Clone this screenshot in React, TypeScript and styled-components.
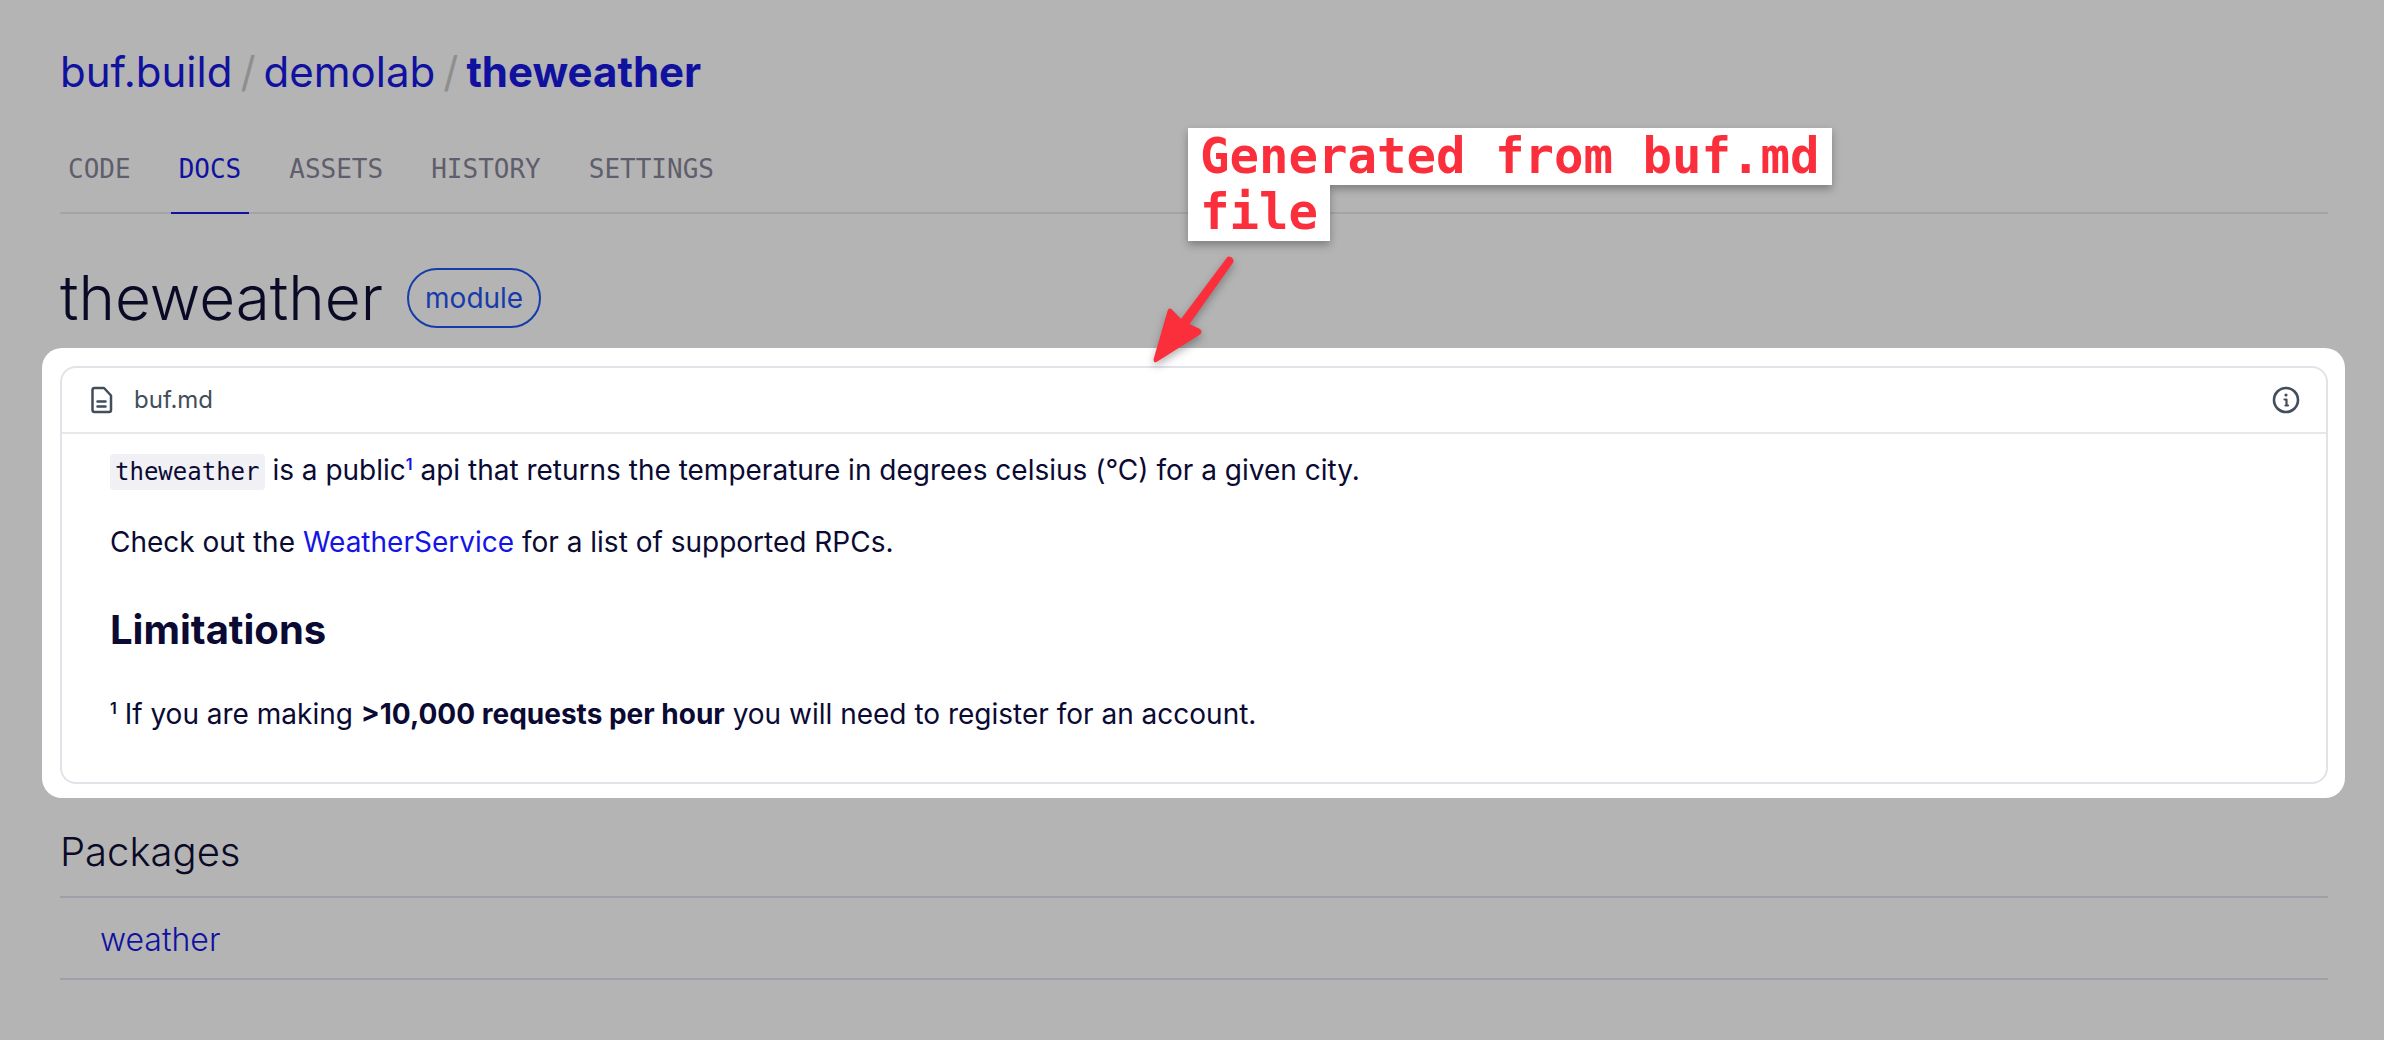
import React from "react";
import styled, { createGlobalStyle } from "styled-components";

const sans = `Inter, "Liberation Sans", sans-serif`;
const mono = `"DejaVu Sans Mono", "Liberation Mono", monospace`;

const GlobalStyle = createGlobalStyle`
  *, *::before, *::after { box-sizing: border-box; }
  body {
    margin: 0;
    background: #b4b4b4;
    color: #0a0a26;
    font-family: ${sans};
  }
  a { color: inherit; text-decoration: none; }
  h1, h2, p, ul, ol { margin: 0; padding: 0; }
  ul, ol { list-style: none; }
`;

const Page = styled.main`
  position: relative;
  min-height: 100vh;
  padding: 48px 56px 60px 60px;
`;

const Breadcrumb = styled.ol`
  display: flex;
  align-items: center;
  gap: 8px;
  font-size: 42px;
  line-height: 48px;
  color: #1111a0;
`;

const Crumb = styled.li<{ $current?: boolean }>`
  font-weight: ${(p) => (p.$current ? 700 : 400)};
`;

const Slash = styled.li`
  color: #8f8f8f;
`;

const Tabs = styled.nav`
  display: flex;
  gap: 32px;
  margin-top: 44px;
  box-shadow: inset 0 -2px #a4a4a6;
`;

const Tab = styled.a<{ $active?: boolean }>`
  padding: 14px 8px 28px;
  border-bottom: 2px solid ${(p) => (p.$active ? "#1111a0" : "transparent")};
  color: ${(p) => (p.$active ? "#1111a0" : "#5f5e6c")};
  font: 26px/30px ${mono};
`;

const TitleRow = styled.header`
  display: flex;
  align-items: center;
  gap: 24px;
  padding: 48px 0 14px;
`;

const Title = styled.h1`
  font-size: 62px;
  font-weight: 300;
  line-height: 72px;
`;

const Badge = styled.span`
  padding: 0 16px;
  border: 2px solid #173caa;
  border-radius: 30px;
  color: #173caa;
  font-size: 28px;
  line-height: 56px;
`;

const Spotlight = styled.section`
  margin: 0 -17px 0 -18px;
  padding: 18px 17px 14px 18px;
  border-radius: 20px;
  background: #fff;
`;

const Card = styled.article`
  border: 2px solid #e2e2e9;
  border-radius: 16px;
  color: #0a0a33;
`;

const CardHeader = styled.header`
  display: flex;
  align-items: center;
  justify-content: space-between;
  height: 66px;
  padding: 0 24px;
  border-bottom: 2px solid #e8e8ea;
  color: #424e5b;
`;

const FileName = styled.div`
  display: flex;
  align-items: center;
  gap: 16px;
  font-size: 24px;
  line-height: 32px;
`;

const InfoButton = styled.button`
  display: flex;
  padding: 0;
  border: 0;
  background: none;
  color: inherit;
`;

const Markdown = styled.div`
  padding: 16px 48px 48px;
  font-size: 28px;
  line-height: 40px;
`;

const Paragraph = styled.p`
  margin-bottom: 32px;

  &:last-child { margin-bottom: 0; }
`;

const Heading = styled.h2`
  margin-bottom: 40px;
  padding-top: 12px;
  font-size: 40px;
  font-weight: 700;
  line-height: 48px;
`;

const Code = styled.code`
  padding: 4px 5px;
  border-radius: 4px;
  background: #f0f0f5;
  font: 24px ${mono};
`;

const TextLink = styled.a`
  && { color: #1414e6; }
`;

const Sup = styled.sup`
  font-size: 16px;
  line-height: 0;
  font-weight: 600;
`;

const Packages = styled.section`
  padding-top: 30px;
`;

const SectionTitle = styled.h2`
  padding-bottom: 20px;
  border-bottom: 2px solid #9f9fa8;
  font-size: 40px;
  font-weight: 300;
  line-height: 48px;
`;

const PackageItem = styled.li`
  padding: 22px 40px 18px;
  border-bottom: 2px solid #9f9fa8;
  color: #1111a0;
  font-size: 32px;
  font-weight: 300;
  line-height: 40px;
`;

const Callout = styled.aside`
  position: absolute;
  top: 129px;
  left: calc(50% - 40px);
  width: 700px;
  color: #fb2f3c;
  filter: drop-shadow(0 4px 4px rgba(0, 0, 0, 0.3));
`;

const CalloutText = styled.p`
  padding-left: 36px;
  font: 700 49px/56px ${mono};
`;

const CalloutLine = styled.span`
  padding: 0 12px;
  background: #fff;
  box-decoration-break: clone;
  -webkit-box-decoration-break: clone;
`;

const Arrow = styled.svg`
  display: block;
  margin-top: 12px;
`;

const tabs = ["CODE", "DOCS", "ASSETS", "HISTORY", "SETTINGS"];

const FileIcon = () => (
  <svg width="32" height="32" viewBox="0 0 32 32" fill="none" stroke="currentColor" strokeWidth="2.500" strokeLinecap="round" strokeLinejoin="round" aria-hidden="true">
    <path d="M8.500 4h9.500l7 7.500v14.500a2 2 0 0 1-2 2h-14.500a2 2 0 0 1-2-2v-20a2 2 0 0 1 2-2z" />
    <path d="M11.500 17.500h8M11.500 22.500h8" />
  </svg>
);

const InfoIcon = () => (
  <svg width="32" height="32" viewBox="0 0 32 32" fill="none" stroke="currentColor" strokeLinecap="round" strokeLinejoin="round" aria-hidden="true">
    <circle cx="16" cy="16" r="12" strokeWidth="2.600" />
    <path d="M14.500 15.500h2v6M15.500 21.500h2.500" strokeWidth="2.200" />
    <circle cx="16" cy="11" r="1.600" fill="currentColor" stroke="none" />
  </svg>
);

export default function App() {
  return (
    <>
      <GlobalStyle />
      <Page>
        <nav aria-label="Breadcrumb">
          <Breadcrumb>
            <Crumb><a href="#buf">buf.build</a></Crumb>
            <Slash aria-hidden="true">/</Slash>
            <Crumb><a href="#demolab">demolab</a></Crumb>
            <Slash aria-hidden="true">/</Slash>
            <Crumb $current><a href="#theweather">theweather</a></Crumb>
          </Breadcrumb>
        </nav>
        <Tabs aria-label="Repository">
          {tabs.map((tab) => (
            <Tab key={tab} href={`#${tab.toLowerCase()}`} $active={tab === "DOCS"}>{tab}</Tab>
          ))}
        </Tabs>
        <TitleRow>
          <Title>theweather</Title>
          <Badge>module</Badge>
        </TitleRow>
        <Spotlight>
          <Card>
            <CardHeader>
              <FileName><FileIcon />buf.md</FileName>
              <InfoButton type="button" aria-label="About this file"><InfoIcon /></InfoButton>
            </CardHeader>
            <Markdown>
              <Paragraph>
                <Code>theweather</Code> is a public<TextLink href="#limit"><Sup>1</Sup></TextLink> api that returns the temperature in degrees celsius (°C) for a given city.
              </Paragraph>
              <Paragraph>
                Check out the <TextLink href="#service">WeatherService</TextLink> for a list of supported RPCs.
              </Paragraph>
              <Heading>Limitations</Heading>
              <Paragraph id="limit">
                <Sup>1</Sup> If you are making <strong>&gt;10,000 requests per hour</strong> you will need to register for an account.
              </Paragraph>
            </Markdown>
          </Card>
        </Spotlight>
        <Packages>
          <SectionTitle>Packages</SectionTitle>
          <ul>
            <PackageItem><a href="#weather">weather</a></PackageItem>
          </ul>
        </Packages>
        <Callout>
          <CalloutText>
            <CalloutLine>Generated from buf.md<br />file</CalloutLine>
          </CalloutText>
          <Arrow width="90" height="112" viewBox="0 0 90 112" fill="currentColor" aria-hidden="true">
            <path d="M75 4.500L29 66L20 56.500Q16.500 54 15.500 58L1.500 106.500Q1.500 110 4.500 109L48 81.500Q51 79 48 76L37.500 71L81.500 9Q82 6 79 4Q76 3 75 4.500Z" />
          </Arrow>
        </Callout>
      </Page>
    </>
  );
}
